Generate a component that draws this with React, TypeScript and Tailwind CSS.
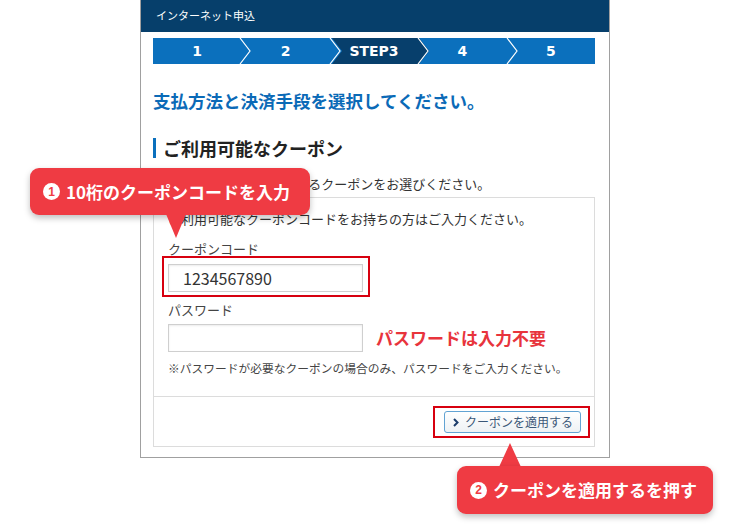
import React from 'react';

const steps = ['1', '2', 'STEP3', '4', '5'];

const StepBar: React.FC = () => (
  <div className="relative mt-[6px] h-[26px] bg-[#0b70bd]">
    {/* chevrons and the current step drawn behind the labels */}
    <svg className="absolute inset-0 h-full w-full" viewBox="0 0 442 26" preserveAspectRatio="none">
      <polygon points="179,0 189,13 179,26 266,26 276,13 266,0" fill="#073f6c" />
      {[87, 177, 265, 354].map((x) => (
        <polyline key={x} points={`${x},0 ${x + 10},13 ${x},26`} fill="none" stroke="#ffffff" strokeWidth="1.2" />
      ))}
    </svg>
    <div className="relative flex h-full">
      {steps.map((s) => (
        <div
          key={s}
          className="flex flex-1 items-center justify-center font-['DejaVu_Sans',sans-serif] text-[14px] font-bold text-white"
        >
          {s}
        </div>
      ))}
    </div>
  </div>
);

const Badge: React.FC<{ n: string }> = ({ n }) => (
  <span className="mr-[6px] flex h-[17px] w-[17px] shrink-0 items-center justify-center rounded-full bg-white font-['Liberation_Sans',sans-serif] text-[12px] font-bold leading-none text-[#ef3b43]">
    {n}
  </span>
);

export default function App() {
  return (
    <div className="relative h-[527px] w-[750px] overflow-hidden bg-white font-['Noto_Sans_CJK_JP',sans-serif] text-[#333]">
      <div className="ml-[140px] w-[470px] border-x border-b border-[#a0a0a0] bg-white">
        <div className="flex h-[32px] items-center bg-[#063f6b] pl-[15px] pb-[1px] text-[11px] text-white">インターネット申込</div>

        <div className="pl-[12px] pr-[14px] pb-[10px]">
          <StepBar />

          <h1 className="mt-[25px] text-[17.5px] font-bold leading-[24px] text-[#0b6ab7]">
            支払方法と決済手段を選択してください。
          </h1>

          <div className="mt-[23px] flex h-[24px] items-center">
            <span className="mr-[7px] h-[20px] w-[3px] bg-[#0b70bd]" />
            <h2 className="text-[18px] font-bold leading-[24px] text-[#222]">ご利用可能なクーポン</h2>
          </div>

          <p className="mt-[14px] text-[13px] leading-[20px]">下記より、ご利用いただけるクーポンをお選びください。</p>

          <div className="mt-[3px] border border-[#dcdcdc]">
            <div className="border-b border-[#dcdcdc] pl-[14px] pt-[11px] pb-[20px]">
              <p className="text-[13px] leading-[20px]">ご利用可能なクーポンコードをお持ちの方はご入力ください。</p>

              <p className="mt-[10px] text-[13px] leading-[20px] text-[#444]">クーポンコード</p>
              <div className="relative mt-[5px] w-[195px]">
                <div className="flex h-[28px] items-center border border-[#cfcfcf] pl-[14px] text-[16px] text-[#333] shadow-[inset_0_1px_2px_rgba(0,0,0,0.08)]">
                  1234567890
                </div>
                <div className="absolute -left-[6px] -top-[8px] -right-[7px] -bottom-[5px] border-2 border-[#d7000f]" />
              </div>

              <p className="mt-[8px] text-[13px] leading-[20px] text-[#444]">パスワード</p>
              <div className="mt-[4px] flex items-center">
                <div className="h-[28px] w-[195px] border border-[#cfcfcf] shadow-[inset_0_1px_2px_rgba(0,0,0,0.08)]" />
                <span className="ml-[13px] text-[17px] font-bold leading-[24px] text-[#e8343c]">パスワードは入力不要</span>
              </div>

              <p className="mt-[8px] text-[11.75px] leading-[16px] text-[#444]">
                ※パスワードが必要なクーポンの場合のみ、パスワードをご入力ください。
              </p>
            </div>

            <div className="flex justify-end pt-[14px] pr-[13px] pb-[13px]">
              <div className="relative">
                <button className="flex h-[22px] w-[137px] items-center justify-center rounded-[3px] border border-[#62a3d3] bg-gradient-to-b from-white to-[#eef2f5] text-[12px] text-[#3b5878]">
                  <svg width="8" height="9" viewBox="0 0 8 9" className="mr-[5px]">
                    <polyline points="2,1 5.5,4.5 2,8" fill="none" stroke="#1c3d6b" strokeWidth="2" />
                  </svg>
                  クーポンを適用する
                </button>
                <div className="absolute -left-[11px] -top-[5px] -right-[9px] -bottom-[5px] border-2 border-[#d7000f]" />
              </div>
            </div>
          </div>
        </div>
      </div>

      {/* callout 1 */}
      <div className="absolute left-[30px] top-[168px] flex h-[47px] w-[280px] items-center rounded-[9px] bg-[#ef3b43] pl-[13px] text-[17px] font-bold text-white shadow-[0_3px_6px_rgba(0,0,0,0.25)]">
        <Badge n="1" />
        10桁のクーポンコードを入力
      </div>
      <svg className="absolute left-[166px] top-[214px]" width="20" height="24" viewBox="0 0 20 24">
        <polygon points="0,0 20,0 10,24" fill="#ef3b43" />
      </svg>

      {/* callout 2 */}
      <svg className="absolute left-[499px] top-[443px]" width="22" height="24" viewBox="0 0 22 24">
        <polygon points="11,0 22,24 0,24" fill="#ef3b43" />
      </svg>
      <div className="absolute left-[457px] top-[466px] flex h-[48px] w-[256px] items-center rounded-[9px] bg-[#ef3b43] pl-[13px] text-[17px] font-bold text-white shadow-[0_3px_6px_rgba(0,0,0,0.25)]">
        <Badge n="2" />
        クーポンを適用するを押す
      </div>
    </div>
  );
}
